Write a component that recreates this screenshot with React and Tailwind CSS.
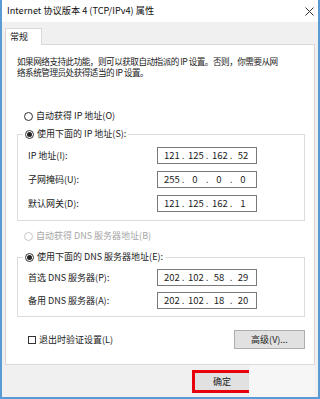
import React from 'react';

const font = { fontFamily: '"Noto Sans CJK SC", "Liberation Sans", sans-serif' };

function Radio({ checked, disabled, label }) {
  return (
    <div className={`flex items-center h-[12px] ${disabled ? 'text-[#a6a6a6]' : 'text-[#1a1a1a]'}`}>
      <span
        className={`w-[9px] h-[9px] rounded-full border flex items-center justify-center bg-white mr-[3px] ${
          disabled ? 'border-[#c8c8c8]' : 'border-[#333]'
        }`}
      >
        {checked && <span className="w-[5px] h-[5px] rounded-full bg-[#222]" />}
      </span>
      <span>{label}</span>
    </div>
  );
}

function IpRow({ label, parts }) {
  return (
    <div className="flex items-center h-[17px]">
      <span className="w-[139px] pl-[10px]">{label}</span>
      <div className="w-[100px] h-[17px] border border-[#7a7a7a] bg-white flex items-center justify-between px-[6px] text-[9.5px] text-[#222]">
        {parts.map((p, i) => (
          <React.Fragment key={i}>
            {i > 0 && <span>.</span>}
            <span className="w-[14px] text-center">{p}</span>
          </React.Fragment>
        ))}
      </div>
    </div>
  );
}

export default function App() {
  return (
    <div
      className="w-[320px] h-[399px] bg-[#f0f0f0] border-l-2 border-r-2 border-b-2 border-[#5b9bd5] flex flex-col text-[9px] text-[#1a1a1a] overflow-hidden"
      style={font}
    >
      {/* title bar */}
      <div className="h-[22px] bg-white flex items-center justify-between pl-[5px] pr-[4px] shrink-0">
        <span className="text-[9.2px] text-[#111]">Internet 协议版本 4 (TCP/IPv4) 属性</span>
        <svg width="9" height="9" viewBox="0 0 9 9">
          <path d="M0.5 0.5 L8.5 8.5 M8.5 0.5 L0.5 8.5" stroke="#333" strokeWidth="1" />
        </svg>
      </div>

      <div className="flex-1 flex flex-col px-[3px] pt-[6px]">
        {/* tab */}
        <div className="flex">
          <div className="w-[37px] h-[17px] bg-white border border-b-0 border-[#d9d9d9] flex items-center pl-[4px] -mb-px relative z-10">
            常规
          </div>
        </div>

        {/* panel */}
        <div className="h-[321px] bg-white border border-[#d9d9d9] pl-[11px] pr-[9px] pt-[11px] flex flex-col">
          <p className="leading-[11px] text-[8.6px] tracking-[-0.5px]">
            如果网络支持此功能，则可以获取自动指派的 IP 设置。否则，你需要从网
            <br />
            络系统管理员处获得适当的 IP 设置。
          </p>

          <div className="mt-[32px] pl-[7px]">
            <Radio label="自动获得 IP 地址(O)" />
          </div>

          <fieldset className="mt-[6px] border border-[#dcdcdc] pb-[8px]">
            <legend className="ml-[5px] px-[2px] bg-white">
              <Radio checked label="使用下面的 IP 地址(S):" />
            </legend>
            <div className="flex flex-col gap-[7px] pt-[7px]">
              <IpRow label="IP 地址(I):" parts={['121', '125', '162', '52']} />
              <IpRow label="子网掩码(U):" parts={['255', '0', '0', '0']} />
              <IpRow label="默认网关(D):" parts={['121', '125', '162', '1']} />
            </div>
          </fieldset>

          <div className="mt-[9px] pl-[7px]">
            <Radio disabled label="自动获得 DNS 服务器地址(B)" />
          </div>

          <fieldset className="mt-[9px] border border-[#dcdcdc] pb-[7px]">
            <legend className="ml-[5px] px-[2px] bg-white">
              <Radio checked label="使用下面的 DNS 服务器地址(E):" />
            </legend>
            <div className="flex flex-col gap-[6px] pt-[6px]">
              <IpRow label="首选 DNS 服务器(P):" parts={['202', '102', '58', '29']} />
              <IpRow label="备用 DNS 服务器(A):" parts={['202', '102', '18', '20']} />
            </div>
          </fieldset>

          <div className="mt-[13px] flex items-center justify-between">
            <div className="flex items-center pl-[11px]">
              <span className="w-[8px] h-[8px] border border-[#333] bg-white mr-[3px]" />
              <span>退出时验证设置(L)</span>
            </div>
            <div className="w-[71px] h-[19px] bg-[#e1e1e1] border border-[#adadad] flex items-center justify-center">
              高级(V)...
            </div>
          </div>
        </div>

        {/* footer */}
        <div className="flex-1 flex items-start pl-[187px] pt-[5px]">
          <div className="w-[60px] h-[23px] border-[3px] border-[#e8000b] bg-[#e1e1e1] flex items-center justify-center">
            确定
          </div>
          <div className="flex-1 self-stretch bg-[#f6f6f6] -mt-[5px] ml-[-3px]" />
        </div>
      </div>
    </div>
  );
}
